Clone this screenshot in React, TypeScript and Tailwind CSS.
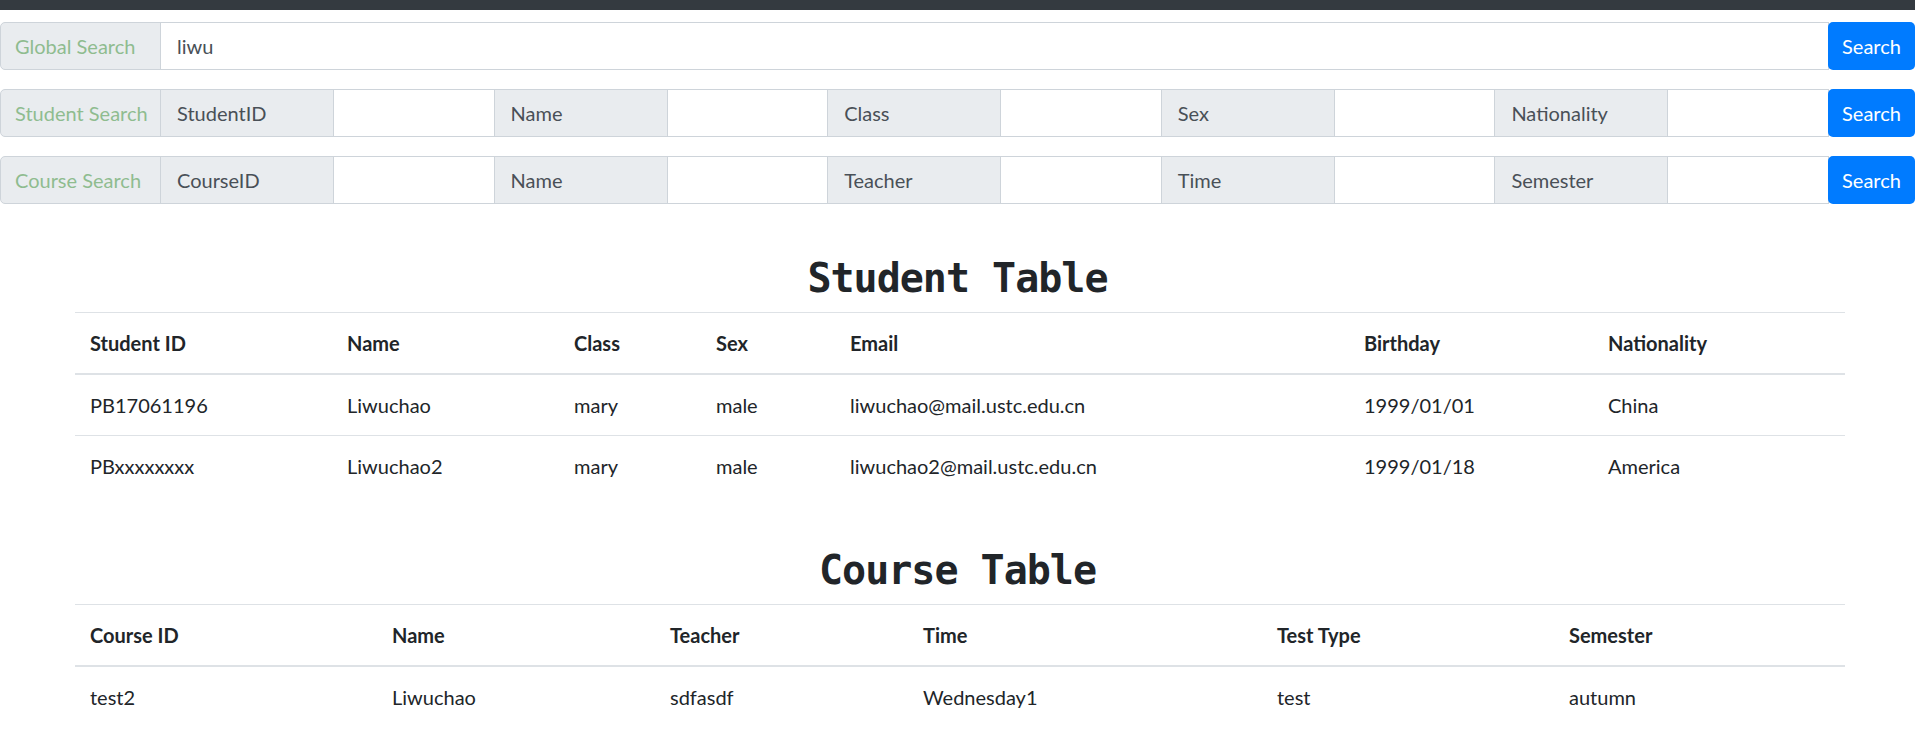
import { useState } from "react"

const labelCls =
  "w-[174px] shrink-0 h-full flex items-center px-4 bg-[#e9ecef] border border-[#ced4da] text-[#495057] -ml-px whitespace-nowrap"
const inputCls =
  "flex-1 min-w-0 h-full px-4 border border-[#ced4da] bg-white text-[#495057] outline-none -ml-px"
const titleCls =
  "w-[161px] shrink-0 flex items-center px-[14px] bg-[#e9ecef] border border-[#ced4da] rounded-l-[5px] text-[#8fbc8f] whitespace-nowrap overflow-hidden"

interface SearchRowProps {
  title: string
  fields: string[]
}

const SearchRow = ({ title, fields }: SearchRowProps) => {
  return (
    <div className="flex h-12 items-stretch">
      <div className={titleCls}>{title}</div>
      {fields.map((f) => (
        <div key={f} className="contents">
          <div className={labelCls}>{f}</div>
          <input className={inputCls} />
        </div>
      ))}
      <button className="w-[87px] shrink-0 bg-[#007bff] text-white rounded-[5px] -ml-px">Search</button>
    </div>
  )
}

interface DataTableProps {
  title: string
  widths: string[]
  headers: string[]
  rows: string[][]
}

const DataTable = ({ title, widths, headers, rows }: DataTableProps) => {
  return (
    <div>
      <h2 className="mt-[50px] mb-[10px] h-12 text-center text-[40px] leading-[48px] font-bold tracking-[-1px] text-[#212529] [font-family:'DejaVu_Sans_Mono',monospace]">
        {title}
      </h2>
      <div className="pl-[75px] pr-[70px]">
        <table className="w-full table-fixed border-collapse text-[#212529]">
          <colgroup>
            {widths.map((w, i) => (
              <col key={i} className={w} />
            ))}
          </colgroup>
          <thead>
            <tr>
              {headers.map((h) => (
                <th
                  key={h}
                  className="text-left font-bold px-[15px] py-[15px] leading-[30px] border-t border-[#dee2e6] border-b-2"
                >
                  {h}
                </th>
              ))}
            </tr>
          </thead>
          <tbody>
            {rows.map((r, i) => (
              <tr key={i}>
                {r.map((c, j) => (
                  <td key={j} className="px-[15px] py-[15px] leading-[30px] border-t border-[#dee2e6]">
                    {c}
                  </td>
                ))}
              </tr>
            ))}
          </tbody>
        </table>
      </div>
    </div>
  )
}

export default function App() {
  const [query, setQuery] = useState("liwu")

  return (
    <div className="min-h-screen bg-white text-[20px] [font-family:Lato,'Open_Sans',sans-serif]">
      <div className="h-[10px] bg-[#343a40]" />

      <div className="mt-3 flex flex-col gap-[19px]">
        <div className="flex h-12 items-stretch">
          <div className={titleCls}>Global Search</div>
          <input
            value={query}
            onChange={(e) => setQuery(e.target.value)}
            className={inputCls}
          />
          <button className="w-[87px] shrink-0 bg-[#007bff] text-white rounded-[5px] -ml-px">Search</button>
        </div>
        <SearchRow title="Student Search" fields={["StudentID", "Name", "Class", "Sex", "Nationality"]} />
        <SearchRow title="Course Search" fields={["CourseID", "Name", "Teacher", "Time", "Semester"]} />
      </div>

      <DataTable
        title="Student Table"
        widths={["w-[257px]", "w-[227px]", "w-[142px]", "w-[134px]", "w-[514px]", "w-[244px]", "w-[252px]"]}
        headers={["Student ID", "Name", "Class", "Sex", "Email", "Birthday", "Nationality"]}
        rows={[
          ["PB17061196", "Liwuchao", "mary", "male", "liwuchao@mail.ustc.edu.cn", "1999/01/01", "China"],
          ["PBxxxxxxxx", "Liwuchao2", "mary", "male", "liwuchao2@mail.ustc.edu.cn", "1999/01/18", "America"],
        ]}
      />

      <DataTable
        title="Course Table"
        widths={["w-[302px]", "w-[278px]", "w-[253px]", "w-[354px]", "w-[292px]", "w-[291px]"]}
        headers={["Course ID", "Name", "Teacher", "Time", "Test Type", "Semester"]}
        rows={[["test2", "Liwuchao", "sdfasdf", "Wednesday1", "test", "autumn"]]}
      />
    </div>
  )
}
